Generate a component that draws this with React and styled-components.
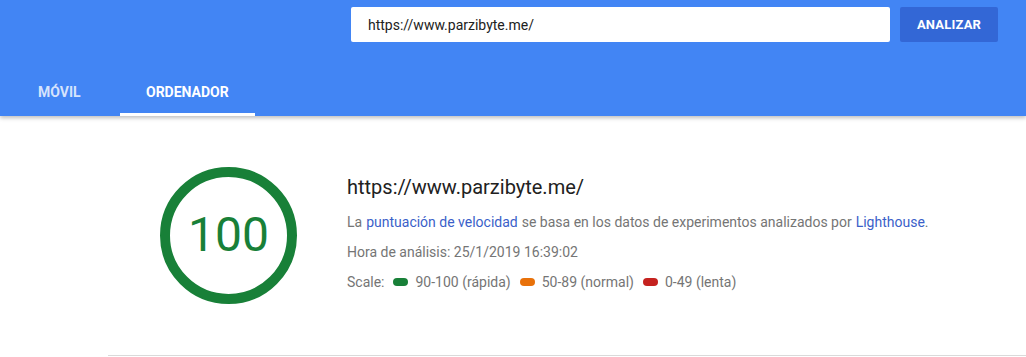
import styled, { createGlobalStyle } from 'styled-components'

const Global = createGlobalStyle`
    body {
        margin: 0;
        background: #fff;
        font-family: Roboto, "Liberation Sans", Arial, sans-serif;
    }
`

/* cabecera azul */
const Header = styled.header`
    background: #4285f4;
    height: 116px;
    box-shadow: 0 2px 4px rgba(0, 0, 0, 0.25);
    position: relative;
    z-index: 1;
    display: flex;
    flex-direction: column;
`

const SearchRow = styled.div`
    display: flex;
    align-items: center;
    gap: 10px;
    padding: 7px 0 0 351px;
`

const UrlInput = styled.div`
    box-sizing: border-box;
    width: 539px;
    height: 35px;
    background: #fff;
    border-radius: 2px;
    padding: 0 17px;
    display: flex;
    align-items: center;
    font-size: 14px;
    color: #212121;
`

const AnalyzeButton = styled.button`
    width: 98px;
    height: 35px;
    border: none;
    border-radius: 2px;
    background: #3367d6;
    color: #fff;
    font-family: inherit;
    font-size: 13px;
    font-weight: 700;
    letter-spacing: 0.2px;
`

const Tabs = styled.nav`
    display: flex;
    margin-top: auto;
`

const Tab = styled.div`
    box-sizing: border-box;
    height: 48px;
    width: ${p => p.$width}px;
    padding-left: ${p => p.$pad}px;
    display: flex;
    align-items: center;
    font-size: 14px;
    font-weight: 700;
    color: ${p => (p.$active ? '#fff' : 'rgba(255,255,255,0.78)')};
    border-bottom: 3px solid ${p => (p.$active ? '#fff' : 'transparent')};
    padding-top: 3px;
`

const Main = styled.main`
    display: flex;
    align-items: flex-start;
    padding: 51px 0 0 160px;
    height: 188px;
`

const Gauge = styled.div`
    box-sizing: border-box;
    width: 137px;
    height: 137px;
    border-radius: 50%;
    border: 10px solid #188038;
    display: flex;
    align-items: center;
    justify-content: center;
    color: #188038;
    font-size: 48px;
    padding-bottom: 2px;
`

const Info = styled.div`
    margin-left: 50px;
    padding-top: 8px;
    display: flex;
    flex-direction: column;
`

const Url = styled.div`
    font-size: 20px;
    color: #212121;
    line-height: 24px;
    margin-bottom: 1px;
`

const Line = styled.div`
    font-size: 14px;
    color: #757575;
    line-height: 16px;
    margin-top: 14px;
    display: flex;
    align-items: center;
`

const Anchor = styled.a`
    color: #3b5fc9;
    text-decoration: none;
    margin: 0 4px;
    &:last-child {
        margin-right: 0;
    }
`

const Pill = styled.span`
    display: inline-block;
    width: 15px;
    height: 8px;
    border-radius: 4px;
    background: ${p => p.$color};
    margin: 0 7px 0 9px;
`

const Divider = styled.hr`
    margin: 0 0 0 108px;
    border: none;
    border-top: 1px solid #dadada;
`

export default function App() {
    return <>
        <Global />
        <Header>
            <SearchRow>
                <UrlInput>https://www.parzibyte.me/</UrlInput>
                <AnalyzeButton>ANALIZAR</AnalyzeButton>
            </SearchRow>
            <Tabs>
                <Tab $width={120} $pad={38}>MÓVIL</Tab>
                <Tab $width={135} $pad={26} $active>ORDENADOR</Tab>
            </Tabs>
        </Header>
        <Main>
            <Gauge>100</Gauge>
            <Info>
                <Url>https://www.parzibyte.me/</Url>
                <Line>
                    La<Anchor href="#">puntuación de velocidad</Anchor>se basa en los datos de experimentos analizados por<Anchor href="#">Lighthouse</Anchor>.
                </Line>
                <Line>Hora de análisis: 25/1/2019 16:39:02</Line>
                <Line>
                    Scale:<Pill $color="#188038" />90-100 (rápida)
                    <Pill $color="#e8710a" />50-89 (normal)
                    <Pill $color="#c5221f" />0-49 (lenta)
                </Line>
            </Info>
        </Main>
        <Divider />
    </>
}
